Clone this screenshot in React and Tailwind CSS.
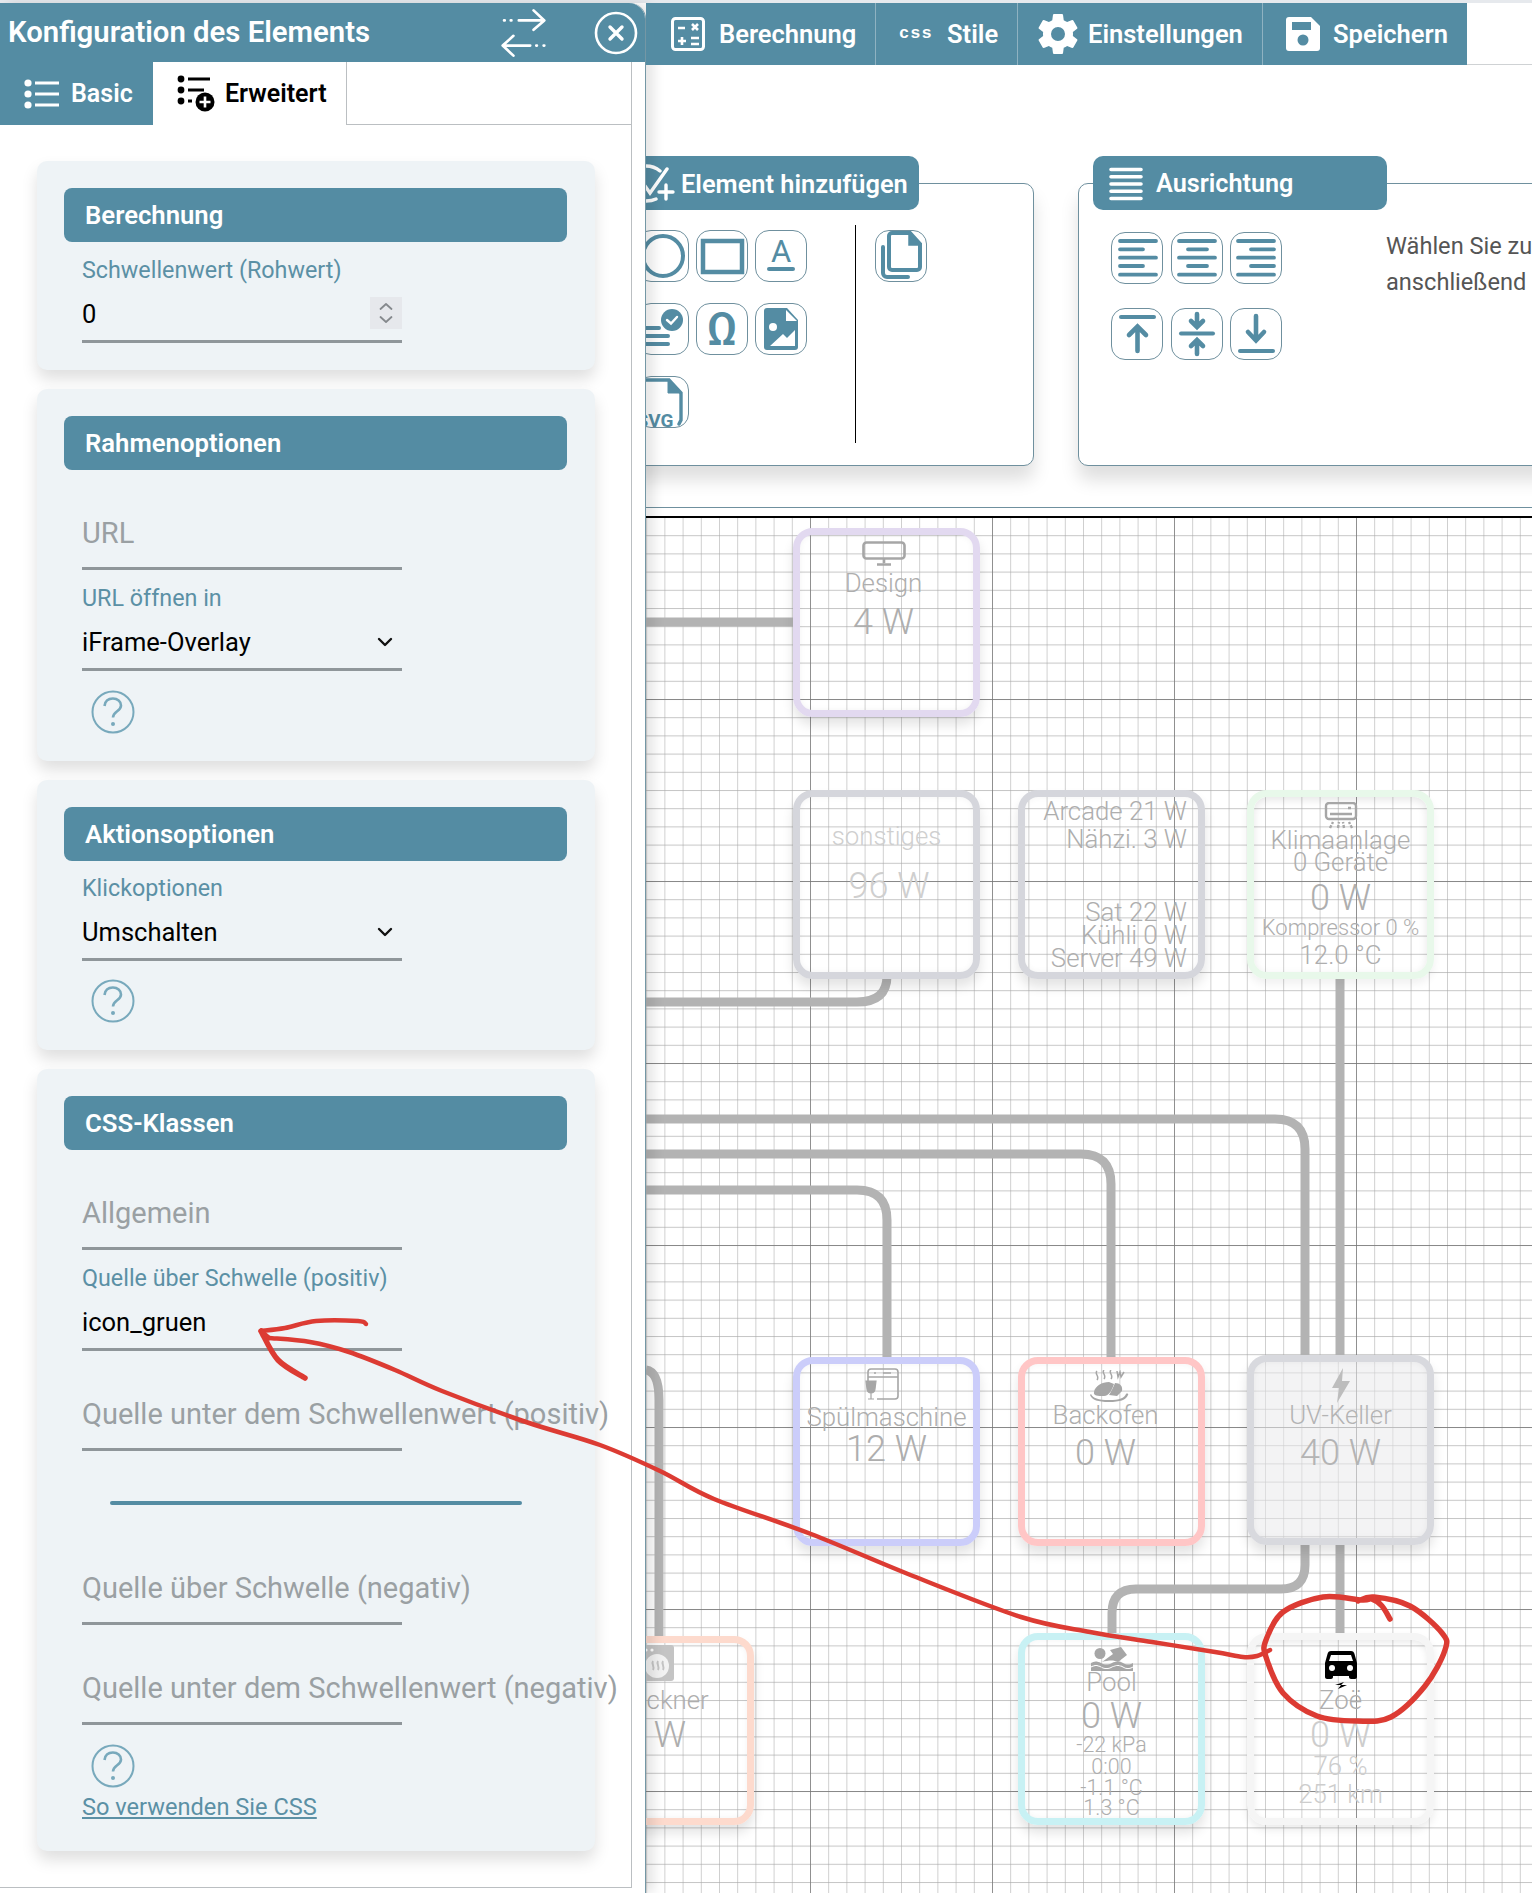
import React from "react";

const TEAL = "#548ca3";

// Turns a list of points into a smooth pen-like curve
function smooth(points) {
  let d = `M${points[0][0]} ${points[0][1]}`;
  for (let i = 0; i < points.length - 1; i++) {
    const p0 = points[i - 1] || points[i];
    const p1 = points[i];
    const p2 = points[i + 1];
    const p3 = points[i + 2] || p2;
    const c1x = p1[0] + (p2[0] - p0[0]) / 6;
    const c1y = p1[1] + (p2[1] - p0[1]) / 6;
    const c2x = p2[0] - (p3[0] - p1[0]) / 6;
    const c2y = p2[1] - (p3[1] - p1[1]) / 6;
    d += ` C${c1x} ${c1y} ${c2x} ${c2y} ${p2[0]} ${p2[1]}`;
  }
  return d;
}

/* ---------- toolbar and panel icons ---------- */

function SwapIcon() {
  return (
    <svg width="47" height="52" viewBox="60 20 140 155" fill="none" stroke="#fff" strokeWidth="8" strokeLinecap="round" strokeLinejoin="round">
      <path d="M72 60h2M92 60h2M116 60h72M160 30l32 30-32 28" />
      <path d="M72 135h78M100 106l-32 29 32 30M168 135h2M190 135h2" />
    </svg>
  );
}

function CloseIcon() {
  return (
    <svg width="44" height="44" viewBox="0 0 44 44" fill="none" stroke="#fff" strokeLinecap="round">
      <circle cx="22" cy="22" r="20" strokeWidth="2.6" />
      <path d="M16 16l12 12M28 16L16 28" strokeWidth="3.4" />
    </svg>
  );
}

function ListIcon() {
  return (
    <svg width="38" height="32" viewBox="0 0 38 32" fill="#fff">
      <circle cx="4" cy="5" r="3.6" />
      <circle cx="4" cy="16" r="3.6" />
      <circle cx="4" cy="27" r="3.6" />
      <rect x="11" y="3.5" width="24" height="3" />
      <rect x="11" y="14.5" width="24" height="3" />
      <rect x="11" y="25.5" width="24" height="3" />
    </svg>
  );
}

function ListPlusIcon() {
  return (
    <svg width="38" height="40" viewBox="0 0 38 40" fill="#000">
      <circle cx="4" cy="5" r="3.4" />
      <circle cx="4" cy="16" r="3.4" />
      <circle cx="4" cy="27" r="3.4" />
      <rect x="11" y="3.5" width="22" height="3" />
      <rect x="11" y="14.5" width="16" height="3" />
      <rect x="11" y="25.5" width="4" height="3" />
      <circle cx="28" cy="28" r="9.5" />
      <path d="M28 22.5v11M22.5 28h11" stroke="#fff" strokeWidth="2.6" />
    </svg>
  );
}

function CalcIcon() {
  return (
    <svg width="34" height="34" viewBox="0 0 34 34" fill="none" stroke="#fff" strokeWidth="3">
      <rect x="1.5" y="1.5" width="31" height="31" rx="3" />
      <path d="M7 11h7M21 7l6 6M27 7l-6 6M7 24h8M11 20v8M20 21h8M20 27h8" strokeWidth="2.6" />
    </svg>
  );
}

function GearIcon() {
  return (
    <svg width="42" height="42" viewBox="1.5 1.5 21 21" fill="#fff">
      <path d="M12,15.5A3.5,3.5 0 0,1 8.5,12A3.5,3.5 0 0,1 12,8.5A3.5,3.5 0 0,1 15.5,12A3.5,3.5 0 0,1 12,15.5M19.43,12.97C19.47,12.65 19.5,12.33 19.5,12C19.5,11.67 19.47,11.34 19.43,11L21.54,9.37C21.73,9.22 21.78,8.95 21.66,8.73L19.66,5.27C19.54,5.05 19.27,4.96 19.05,5.05L16.56,6.05C16.04,5.66 15.5,5.32 14.87,5.07L14.5,2.42C14.46,2.18 14.25,2 14,2H10C9.75,2 9.54,2.18 9.5,2.42L9.13,5.07C8.5,5.32 7.96,5.66 7.44,6.05L4.95,5.05C4.73,4.96 4.46,5.05 4.34,5.27L2.34,8.73C2.21,8.95 2.27,9.22 2.46,9.37L4.57,11C4.53,11.34 4.5,11.67 4.5,12C4.5,12.33 4.53,12.65 4.57,12.97L2.46,14.63C2.27,14.78 2.21,15.05 2.34,15.27L4.34,18.73C4.46,18.95 4.73,19.03 4.95,18.95L7.44,17.94C7.96,18.34 8.5,18.68 9.13,18.93L9.5,21.58C9.54,21.82 9.75,22 10,22H14C14.25,22 14.46,21.82 14.5,21.58L14.87,18.93C15.5,18.67 16.04,18.34 16.56,17.94L19.05,18.95C19.27,19.03 19.54,18.95 19.66,18.73L21.66,15.27C21.78,15.05 21.73,14.78 21.54,14.63L19.43,12.97Z" />
    </svg>
  );
}

function SaveIcon() {
  return (
    <svg width="34" height="34" viewBox="0 0 34 34">
      <path d="M3 0h22l9 9v22a3 3 0 0 1-3 3H3a3 3 0 0 1-3-3V3a3 3 0 0 1 3-3z" fill="#fff" />
      <rect x="6" y="5" width="19" height="8" fill={TEAL} />
      <circle cx="17" cy="23" r="5.5" fill={TEAL} />
    </svg>
  );
}

function AddElementIcon() {
  return (
    <svg width="46" height="54" viewBox="630 156 46 54" fill="none" stroke="#fff" strokeWidth="3.4" strokeLinecap="round">
      <path d="M646 165Q654 165 660 170M646 200Q652 200 656 198" />
      <path d="M667 168L650 192L645 185" />
      <path d="M666 184v14M659 191h14" />
    </svg>
  );
}

function AlignLinesIcon() {
  return (
    <svg width="34" height="34" viewBox="0 0 34 34" stroke="#fff" strokeWidth="3.6" strokeLinecap="round">
      <path d="M2 2.5h30M2 9.8h30M2 17h30M2 24.2h30M2 31.5h30" />
    </svg>
  );
}

function Chevron() {
  return (
    <svg width="16" height="10" viewBox="0 0 16 10" fill="none" stroke="#111" strokeWidth="2.4" strokeLinecap="round" strokeLinejoin="round">
      <path d="M2 2l6 6 6-6" />
    </svg>
  );
}

function HelpIcon() {
  return (
    <svg width="44" height="44" viewBox="0 0 44 44" fill="none" stroke="#78a9bc" strokeWidth="2">
      <circle cx="22" cy="22" r="20.5" />
      <path d="M13.5 16c.6-5 4-7.500 8.400-7.500 4.600 0 8.100 2.800 8.100 6.900 0 5.900-8 5.700-8 12.100" strokeWidth="2.6" />
      <circle cx="22" cy="34" r="2" fill="#78a9bc" stroke="none" />
    </svg>
  );
}

/* ---------- drawing-tool buttons ---------- */

function ToolButton({ children }) {
  return (
    <div className="w-[52px] h-[52px] rounded-[14px] border border-[#6f909e] bg-white flex items-center justify-center overflow-hidden">
      <svg width="52" height="52" viewBox="0 0 52 52" fill="none" stroke={TEAL} strokeWidth="4" strokeLinecap="round" className="shrink-0">
        {children}
      </svg>
    </div>
  );
}

const tools = [
  <circle key="circle" cx="26" cy="26" r="20" />,
  <rect key="rect" x="7" y="11" width="39" height="31" strokeWidth="4.5" strokeLinecap="butt" />,
  <g key="text">
    <text x="26" y="32" textAnchor="middle" fontSize="31" fontFamily="Roboto" fill={TEAL} stroke="none">A</text>
    <path d="M14 39h24" />
  </g>,
  <g key="list">
    <path d="M6 25h16M6 33h25M6 41h25" />
    <circle cx="35" cy="17" r="11" fill={TEAL} stroke="none" />
    <path d="M30 17l4 3.5 6-6.5" stroke="#fff" strokeWidth="2.4" />
  </g>,
  <text key="omega" x="26" y="42" textAnchor="middle" fontSize="46" fontWeight="500" fontFamily="Roboto" fill={TEAL} stroke="none">Ω</text>,
  <g key="image">
    <path d="M12 5h20l11 12v27a3 3 0 0 1-3 3H12a3 3 0 0 1-3-3V8a3 3 0 0 1 3-3z" fill={TEAL} stroke="none" />
    <path d="M31 7v11h11z" fill="#fff" stroke="none" />
    <circle cx="18" cy="24" r="4" fill="#fff" stroke="none" />
    <path d="M15 43l13-12 4 4 8-8v16z" fill="#fff" stroke="none" />
  </g>,
];

function SvgFileTool() {
  return (
    <ToolButton>
      <path d="M6 4h26l12 13v27l-2 4" strokeWidth="3.4" />
      <path d="M31 4v13h13z" fill={TEAL} strokeWidth="1" />
      <text x="18" y="51" textAnchor="middle" fontSize="19" fontWeight="700" fontFamily="Roboto" fill={TEAL} stroke="none">SVG</text>
    </ToolButton>
  );
}

function CopyTool() {
  return (
    <ToolButton>
      <path d="M17 3h18l10 11v23a3 3 0 0 1-3 3H17a3 3 0 0 1-3-3V6a3 3 0 0 1 3-3z" />
      <path d="M34 4v11h10z" fill={TEAL} strokeWidth="1.5" />
      <path d="M8 17v26a4 4 0 0 0 4 4h21" />
    </ToolButton>
  );
}

const hAlign = [
  <path key="l" d="M9 9h36M9 17.3h23M9 25.7h36M9 34h23M9 42.7h36" strokeWidth="3.8" />,
  <path key="c" d="M8 9h36M17 17.3h19M8 25.7h36M17 34h19M8 42.7h36" strokeWidth="3.8" />,
  <path key="r" d="M8 9h36M21 17.3h23M8 25.7h36M21 34h23M8 42.7h36" strokeWidth="3.8" />,
];

const vAlign = [
  <g key="t">
    <path d="M10 9h33" strokeWidth="4" />
    <path d="M26.5 43V19M18 27l8.5-8.5 8.5 8.5" strokeWidth="4.6" />
  </g>,
  <g key="m">
    <path d="M10 25.5h32" strokeWidth="4" />
    <path d="M26 6v12M20 13l6 6 6-6M26 46V34M20 38l6-6 6 6" strokeWidth="4.6" />
  </g>,
  <g key="b">
    <path d="M26 8v24M18 24l8 8.5 8-8.5" strokeWidth="4.6" />
    <path d="M10 43h33" strokeWidth="4" />
  </g>,
];

/* ---------- form pieces of the configuration panel ---------- */

function Card({ children, className }) {
  return (
    <section className={`w-[558px] ml-[37px] rounded-[10px] bg-[#eef3f6] shadow-[0_9px_16px_rgba(0,0,0,0.13)] pt-[27px] pl-[27px] pr-[28px] ${className}`}>
      {children}
    </section>
  );
}

function CardTitle({ children }) {
  return (
    <div className="h-[54px] rounded-[8px] bg-[#548ca3] pl-[21px] flex items-center text-white text-[25.7px] font-semibold">
      {children}
    </div>
  );
}

function PlaceholderField({ text, h = "h-[100px]" }) {
  return (
    <div className={`ml-[18px] w-[320px] ${h} flex flex-col justify-end border-b-[3px] border-[#8f969a]`}>
      <div className="h-[70px] pt-[3px] flex items-center whitespace-nowrap text-[29px] text-[#9aa0a3]">{text}</div>
    </div>
  );
}

function ValueField({ label, h = "h-[100px]", children }) {
  return (
    <div className={`ml-[18px] w-[320px] ${h} flex flex-col justify-end border-b-[3px] border-[#8f969a]`}>
      <div className="h-[24px] mb-[4px] flex items-center whitespace-nowrap text-[23.3px] text-[#5b90a5]">{label}</div>
      <div className="h-[54px] pt-[2px] flex items-center justify-between text-[25.5px] text-black">{children}</div>
    </div>
  );
}

function Help({ className }) {
  return (
    <div className={`ml-[27px] ${className}`}>
      <HelpIcon />
    </div>
  );
}

function ConfigPanel() {
  return (
    <aside className="relative z-10 w-[646px] shrink-0 flex flex-col bg-white border-r border-[#7497a5] rounded-tr-[16px] shadow-[8px_0_12px_rgba(0,0,0,0.1)]">
      <header className="h-[59px] bg-[#548ca3] rounded-tr-[16px] flex items-center pl-[8px] text-white">
        <h1 className="w-[492px] text-[29.3px] leading-none font-semibold whitespace-nowrap">Konfiguration des Elements</h1>
        <SwapIcon />
        <div className="ml-[47px]">
          <CloseIcon />
        </div>
      </header>

      <div className="h-[63px] flex text-[25px] font-semibold mr-[13px]">
        <div className="w-[153px] bg-[#548ca3] text-white flex items-center pl-[24px] gap-[9px]">
          <ListIcon />
          <span className="pt-[1px]">Basic</span>
        </div>
        <div className="w-[194px] border-r border-[#bbbfc2] flex items-center pl-[24px] gap-[10px] text-black">
          <ListPlusIcon />
          <span className="pt-[1px]">Erweitert</span>
        </div>
        <div className="flex-1 border-b border-r border-[#bbbfc2]" />
      </div>

      <div className="w-[632px] h-[1763px] border-r border-b border-[#bbbfc2] pt-[36px] flex flex-col gap-[19px]">
        <Card className="h-[209px]">
          <CardTitle>Berechnung</CardTitle>
          <ValueField label="Schwellenwert (Rohwert)" h="h-[101px]">
            <span>0</span>
            <div className="w-[32px] h-[32px] bg-[#e6e8ec] flex items-center justify-center mb-[2px]">
              <svg width="16" height="24" viewBox="0 0 16 24" fill="none" stroke="#85898d" strokeWidth="1.8" strokeLinecap="round" strokeLinejoin="round">
                <path d="M2.5 8l5.5-5 5.5 5M2.5 16l5.5 5 5.5-5" />
              </svg>
            </div>
          </ValueField>
        </Card>

        <Card className="h-[372px]">
          <CardTitle>Rahmenoptionen</CardTitle>
          <PlaceholderField text="URL" h="h-[100px]" />
          <ValueField label="URL öffnen in" h="h-[101px]">
            <span>iFrame-Overlay</span>
            <span className="mr-[9px]"><Chevron /></span>
          </ValueField>
          <Help className="mt-[19px]" />
        </Card>

        <Card className="h-[270px]">
          <CardTitle>Aktionsoptionen</CardTitle>
          <ValueField label="Klickoptionen" h="h-[100px]">
            <span>Umschalten</span>
            <span className="mr-[9px]"><Chevron /></span>
          </ValueField>
          <Help className="mt-[18px]" />
        </Card>

        <Card className="h-[782px]">
          <CardTitle>CSS-Klassen</CardTitle>
          <PlaceholderField text="Allgemein" />
          <ValueField label="Quelle über Schwelle (positiv)" h="h-[101px]">
            <span>icon_gruen</span>
          </ValueField>
          <PlaceholderField text="Quelle unter dem Schwellenwert (positiv)" />
          <div className="ml-[46px] mt-[50px] w-[412px] h-[4px] rounded-[2px] bg-[#548ca3]" />
          <PlaceholderField text="Quelle über Schwelle (negativ)" h="h-[120px]" />
          <PlaceholderField text="Quelle unter dem Schwellenwert (negativ)" />
          <Help className="mt-[19px]" />
          <a className="block ml-[18px] mt-[6px] h-[26px] leading-[26px] text-[23.6px] text-[#5b90a5] underline">So verwenden Sie CSS</a>
        </Card>
      </div>
    </aside>
  );
}

/* ---------- top menu ---------- */

function TopMenu() {
  return (
    <nav className="relative z-20 h-[62px] flex text-white text-[25.5px] font-semibold border-b border-[#cfd2d4]">
      <div className="w-[229px] h-[62px] bg-[#548ca3] flex items-center pl-[25px] gap-[14px]">
        <CalcIcon />
        <span className="pt-[1px]">Berechnung</span>
      </div>
      <div className="w-[142px] h-[62px] bg-[#548ca3] border-l border-[#8fb2c1] flex items-center pl-[23px] gap-[12px]">
        <span className="w-[36px] text-[17px] font-bold tracking-[1px] font-['Liberation_Mono',monospace]">css</span>
        <span className="pt-[1px]">Stile</span>
      </div>
      <div className="w-[245px] h-[62px] bg-[#548ca3] border-l border-[#8fb2c1] flex items-center pl-[19px] gap-[9px]">
        <GearIcon />
        <span className="pt-[1px]">Einstellungen</span>
      </div>
      <div className="w-[205px] h-[62px] bg-[#548ca3] border-l border-[#8fb2c1] flex items-center pl-[23px] gap-[13px]">
        <SaveIcon />
        <span className="pt-[1px]">Speichern</span>
      </div>
    </nav>
  );
}

/* ---------- tool groups above the canvas ---------- */

function ToolPanels() {
  return (
    <div className="mt-[118px] flex items-start -ml-[42px]">
      <section className="w-[430px] h-[283px] shrink-0 rounded-[10px] border border-[#6f909e] bg-white shadow-[0_14px_18px_rgba(0,0,0,0.13)]">
        <div className="-mt-[28px] ml-[13px] w-[301px] h-[54px] pt-[2px] rounded-[10px] bg-[#548ca3] text-white text-[25.4px] font-semibold flex items-center pl-[12px] gap-[5px]">
          <AddElementIcon />
          <span className="whitespace-nowrap">Element hinzufügen</span>
        </div>
        <div className="flex mt-[15px]">
          <div className="ml-[32px] w-[218px] mt-[5px] grid grid-cols-[52px_52px_52px] gap-x-[7px] gap-y-[21px] content-start">
            {tools.map((t, i) => (
              <ToolButton key={i}>{t}</ToolButton>
            ))}
            <SvgFileTool />
          </div>
          <div className="w-px h-[218px] bg-black" />
          <div className="ml-[19px] mt-[5px]">
            <CopyTool />
          </div>
        </div>
      </section>

      <section className="ml-[44px] w-[600px] h-[283px] shrink-0 rounded-[10px] border border-[#6f909e] bg-white shadow-[0_14px_18px_rgba(0,0,0,0.13)]">
        <div className="-mt-[28px] ml-[14px] w-[294px] h-[54px] pt-[2px] rounded-[10px] bg-[#548ca3] text-white text-[25.2px] font-semibold flex items-center pl-[16px] gap-[13px]">
          <AlignLinesIcon />
          <span>Ausrichtung</span>
        </div>
        <div className="flex mt-[22px]">
          <div className="ml-[32px] w-[172px] grid grid-cols-[52px_52px_52px] gap-x-[7.5px] gap-y-[24px] content-start">
            {hAlign.map((t, i) => (
              <ToolButton key={i}>{t}</ToolButton>
            ))}
            {vAlign.map((t, i) => (
              <ToolButton key={i}>{t}</ToolButton>
            ))}
          </div>
          <div className="ml-[103px] -mt-[4px] text-[23.6px] leading-[36px] text-[#555] whitespace-nowrap">
            <p>Wählen Sie zuerst</p>
            <p>anschließend</p>
          </div>
        </div>
      </section>
    </div>
  );
}

/* ---------- small device icons used on the canvas nodes ---------- */

const ICON = "#a6a6a6";

const MonitorIcon = () => (
  <svg width="44" height="25" viewBox="0 0 44 25" fill="none" stroke={ICON} strokeWidth="2.6">
    <rect x="1.5" y="1.5" width="41" height="16" rx="3" />
    <path d="M22 18v4M15 23.5h14" />
  </svg>
);
const AcIcon = () => (
  <svg width="34" height="28" viewBox="0 0 34 28" fill="none" stroke={ICON} strokeWidth="2.4">
    <rect x="2" y="1" width="30" height="16" rx="3" />
    <path d="M6 12h22M24 6h3" />
    <path d="M6 26l3-6M14 26l1-6M20 26l-1-6M28 26l-3-6" strokeDasharray="3 1.5" />
  </svg>
);
const DishwasherIcon = () => (
  <svg width="34" height="32" viewBox="0 0 34 32" fill="none" stroke={ICON} strokeWidth="1.6">
    <path d="M3 14V4a3 3 0 0 1 3-3h24a3 3 0 0 1 3 3v24a3 3 0 0 1-3 3H12" />
    <path d="M3 9h30M18 5h8M9 5h2" />
    <path d="M1 13h10l-1 8a4 4 0 0 1-8 0zM6 25v6M3 31h6" fill={ICON} stroke={ICON} strokeWidth="1.2" />
  </svg>
);
const RoastIcon = () => (
  <svg width="39" height="32" viewBox="0 0 39 32" fill={ICON}>
    <path d="M7 1c-3 3 3 5 0 9M14 0c-3 3 3 5 0 9M21 0c-3 3 3 5 0 9M27 1l1 6 2-5 1 5 3-5" fill="none" stroke={ICON} strokeWidth="1.5" />
    <path d="M4 22c1-6 8-10 15-10l5 2c-2 6-5 12-10 12C8 26 3 26 4 22z" />
    <path d="M25 13c5 0 8 3 7 8l-5 5-8-1c2-3 4-7 6-12z" />
    <path d="M1 24c2 4 7 6 18 6s15-2 17-6c1-1 3 0 2 1-2 5-8 7-19 7S2 30 0 25z" />
  </svg>
);
const BoltIcon = () => (
  <svg width="20" height="35" viewBox="0 0 20 35" fill="#bdbdbd">
    <path d="M12 0L1 20h7L6 35 19 13h-8z" />
  </svg>
);
const DryerIcon = () => (
  <svg width="34" height="36" viewBox="0 0 34 36">
    <rect x="0" y="0" width="34" height="36" rx="3" fill="#c4c4c4" />
    <circle cx="6" cy="5" r="1.6" fill="#fff" />
    <circle cx="12" cy="5" r="1.6" fill="#fff" />
    <circle cx="17" cy="21" r="12" fill="#f2f2f2" />
    <path d="M13 16c-2 3 2 5 0 9M18 16c-2 3 2 5 0 9M23 16c-2 3 2 5 0 9" fill="none" stroke="#c4c4c4" strokeWidth="2" />
  </svg>
);
const SwimIcon = () => (
  <svg width="44" height="24" viewBox="0 0 44 24" fill={ICON}>
    <circle cx="10" cy="6.5" r="5.5" />
    <path d="M12 15l11-8-3-4 11-3 6 8-9 7c-4-2-9-2-16 0z" />
    <path d="M1 16c3-2 6-2 10 0s7 2 11 0 7-2 11 0 6 2 10 0v3.5c-4 2-7 2-10 0s-7-2-11 0-7 2-11 0-6-2-10 0z" />
    <path d="M1 20.5c3-2 6-2 10 0s7 2 11 0 7-2 11 0 6 2 10 0v3.5H1z" />
  </svg>
);
const CarChargeIcon = () => (
  <svg width="32" height="39" viewBox="0 0 32 39" fill="#000">
    <path d="M6 1h20c2 0 3 1 3.5 3L32 13v14c0 1-1 2-2 2h-4c-1 0-2-1-2-2v-1H8v1c0 1-1 2-2 2H2c-1 0-2-1-2-2V13l2.5-9C3 2 4 1 6 1zM6 5l-2 6h24l-2-6z" fillRule="evenodd" />
    <circle cx="7" cy="18" r="3" fill="#fff" />
    <circle cx="25" cy="18" r="3" fill="#fff" />
    <path d="M10 35l9-3-3 3h6l-9 4 3-4z" />
  </svg>
);

/* ---------- canvas nodes ---------- */

function Node({ className, children }) {
  return (
    <div className={`absolute w-[187px] h-[189px] box-border rounded-[20px] border-[7px] flex flex-col items-center font-light shadow-[0_8px_12px_rgba(0,0,0,0.11),inset_0_0_6px_rgba(0,0,0,0.05)] whitespace-nowrap ${className}`}>
      {children}
    </div>
  );
}

const NAME = "h-[28px] leading-[28px] text-[25.8px]";
const POWER = "h-[40px] leading-[40px] text-[36px]";
const SMALL = "h-[20px] leading-[20px] text-[21.5px]";

function Canvas() {
  const wires = [
    "M646 622H793",
    "M887 978V976Q887 1002 857 1002H646",
    "M1340 978V1355",
    "M646 1119H1275Q1305 1119 1305 1149V1355",
    "M646 1154H1081Q1111 1154 1111 1184V1357",
    "M646 1190H857Q887 1190 887 1220V1357",
    "M646 1370Q659 1372 659 1400V1636",
    "M1305 1545V1565Q1305 1589 1281 1589H1136Q1112 1589 1112 1613V1633",
    "M1340 1545V1633",
  ];
  return (
    <div className="relative mt-[8px] border-t-2 border-black flex-1 overflow-hidden">
      <svg className="absolute inset-0" width="886" height="1375" viewBox="646 518 886 1375">
        <defs>
          <pattern id="minor" x="628" y="517" width="18.2" height="18.2" patternUnits="userSpaceOnUse">
            <path d="M0 0H18.2" stroke="#c6c6c6" strokeWidth="2" />
            <path d="M0 0V18.2" stroke="#a9a9a9" strokeWidth="1.1" />
          </pattern>
          <pattern id="major" x="628" y="517" width="182" height="182" patternUnits="userSpaceOnUse">
            <path d="M0 0H182M0 0V182" stroke="#757575" strokeWidth="1.4" />
          </pattern>
        </defs>
        <rect x="646" y="518" width="886" height="1375" fill="url(#minor)" />
        <rect x="646" y="518" width="886" height="1375" fill="url(#major)" />
        <g fill="none" stroke="#b3b3b3" strokeWidth="9">
          {wires.map((d) => (
            <path key={d} d={d} />
          ))}
        </g>
      </svg>

      <Node className="left-[147px] top-[10px] border-[#e2d9f0] text-[#aeaeae]">
        <div className="mt-[6px] -ml-[6px] h-[25px]"><MonitorIcon /></div>
        <div className={`mt-[3px] -ml-[6px] ${NAME}`}>Design</div>
        <div className={`mt-[5px] -ml-[6px] ${POWER}`}>4 W</div>
      </Node>

      <Node className="left-[147px] top-[272px] border-[#d5d6dc] text-[#cfcfcf]">
        <div className={`mt-[25px] ${NAME}`}>sonstiges</div>
        <div className={`mt-[16px] ml-[5px] ${POWER}`}>96 W</div>
      </Node>

      <Node className="left-[372px] top-[272px] border-[#d5d6dc] text-[#aeaeae] items-end pr-[11px]">
        <div className={NAME}>Arcade 21 W</div>
        <div className={NAME}>Nähzi. 3 W</div>
        <div className="mt-[47px] h-[24px] leading-[24px] text-[25.8px]">Sat 22 W</div>
        <div className="h-[23px] leading-[23px] text-[25.8px]">Kühli 0 W</div>
        <div className="h-[23px] leading-[23px] text-[25.8px]">Server 49 W</div>
      </Node>

      <Node className="left-[601px] top-[272px] border-[#e8f8ea] text-[#aeaeae] shadow-[inset_0_3px_8px_rgba(0,0,0,0.1),0_5px_8px_rgba(0,0,0,0.06)]">
        <div className="mt-[5px] h-[28px]"><AcIcon /></div>
        <div className="-mt-[1px] h-[22px] leading-[22px] text-[25.8px]">Klimaanlage</div>
        <div className="h-[22px] leading-[22px] text-[25.8px]">0 Geräte</div>
        <div className={`mt-[5px] ${POWER}`}>0 W</div>
        <div className="h-[20px] leading-[20px] text-[22px]">Kompressor 0 %</div>
        <div className="mt-[5px] h-[24px] leading-[24px] text-[25.8px]">12.0 °C</div>
      </Node>

      <Node className="left-[147px] top-[839px] border-[#cbcdfa] text-[#aeaeae]">
        <div className="mt-[4px] -ml-[10px] h-[32px]"><DishwasherIcon /></div>
        <div className={`mt-[3px] ${NAME}`}>Spülmaschine</div>
        <div className={`-mt-[2px] ${POWER}`}>12 W</div>
      </Node>

      <Node className="left-[372px] top-[839px] border-[#ffc6c6] text-[#aeaeae]">
        <div className="mt-[6px] -ml-[4px] h-[32px]"><RoastIcon /></div>
        <div className={`-mt-[1px] -ml-[12px] ${NAME}`}>Backofen</div>
        <div className={`mt-[4px] -ml-[12px] ${POWER}`}>0 W</div>
      </Node>

      <Node className="left-[601px] top-[837px] h-[190px] border-[#d8d9de] bg-[#e9e9eb]/55 text-[#b4b4b4]">
        <div className="mt-[6px] h-[35px]"><BoltIcon /></div>
        <div className={`-mt-[2px] ${NAME}`}>UV-Keller</div>
        <div className={`mt-[4px] ${POWER}`}>40 W</div>
      </Node>

      <Node className="-left-[79px] top-[1118px] border-[#fddacd] text-[#aeaeae]">
        <div className="mt-[2px] -ml-[7px] h-[36px]"><DryerIcon /></div>
        <div className={`mt-[5px] -ml-[3px] ${NAME}`}>Trockner</div>
        <div className={`mt-[1px] -ml-[10px] ${POWER}`}>0 W</div>
      </Node>

      <Node className="left-[372px] top-[1115px] h-[192px] border-[#c8f1f4] text-[#aeaeae]">
        <div className="mt-[7px] h-[24px]"><SwimIcon /></div>
        <div className={`-mt-[3px] ${NAME}`}>Pool</div>
        <div className={POWER}>0 W</div>
        <div className={`-mt-[1px] ${SMALL}`}>-22 kPa</div>
        <div className={`mt-[2px] ${SMALL}`}>0:00</div>
        <div className={`mt-[1px] ${SMALL}`}>-1.1 °C</div>
        <div className={SMALL}>1.3 °C</div>
      </Node>

      <Node className="left-[601px] top-[1115px] h-[192px] border-[#f5f5f5] text-[#cdcdcd] shadow-[inset_0_3px_6px_rgba(0,0,0,0.08),0_5px_8px_rgba(0,0,0,0.08)]">
        <div className="mt-[10px] h-[39px]"><CarChargeIcon /></div>
        <div className={`-mt-[3px] text-[#aeaeae] ${NAME}`}>Zoë</div>
        <div className={`mt-[1px] ${POWER}`}>0 W</div>
        <div className={`-mt-[3px] ${NAME}`}>76 %</div>
        <div className={NAME}>251 km</div>
      </Node>
    </div>
  );
}

/* ---------- hand-drawn red marking over the page ---------- */

function RedMarks() {
  const line = [
    [269, 1338], [310, 1342], [349, 1352], [395, 1370], [442, 1391], [526, 1422], [600, 1445], [660, 1471],
    [714, 1499], [811, 1534], [913, 1576], [1021, 1617], [1090, 1632], [1152, 1642], [1215, 1652], [1243, 1657], [1257, 1656], [1270, 1650],
  ];
  const ring = [
    [1390, 1619], [1382, 1606], [1372, 1599], [1362, 1600], [1323, 1597], [1283, 1612], [1266, 1640], [1266, 1657], [1283, 1693],
    [1317, 1716], [1357, 1721], [1391, 1717], [1425, 1686], [1445, 1650], [1442, 1633], [1410, 1606], [1374, 1597], [1358, 1601],
  ];
  return (
    <svg className="absolute inset-0 z-30 pointer-events-none" width="1532" height="1893" viewBox="0 0 1532 1893" fill="none" stroke="#dc3b33" strokeWidth="4.5" strokeLinecap="round" strokeLinejoin="round">
      <path d={smooth([[366, 1324], [358, 1321], [316, 1321], [285, 1328], [261, 1331]])} />
      <path d={smooth([[261, 1331], [278, 1360], [305, 1378]])} strokeWidth="5.5" />
      <path d="M261 1331L269 1338" />
      <path d={smooth(line)} />
      <path d={smooth(ring)} strokeWidth="5.5" />
    </svg>
  );
}

export default function App() {
  return (
    <div className="relative w-[1532px] h-[1893px] overflow-hidden bg-white pt-[3px] flex font-['Roboto',sans-serif]">
      <div className="absolute left-0 top-0 w-full h-[3px] bg-[#e6e9ed]" />
      <ConfigPanel />
      <main className="flex-1 min-w-0 flex flex-col overflow-hidden">
        <TopMenu />
        <ToolPanels />
        <div className="mt-[41px] border-t border-[#6f909e]" />
        <Canvas />
      </main>
      <RedMarks />
    </div>
  );
}
